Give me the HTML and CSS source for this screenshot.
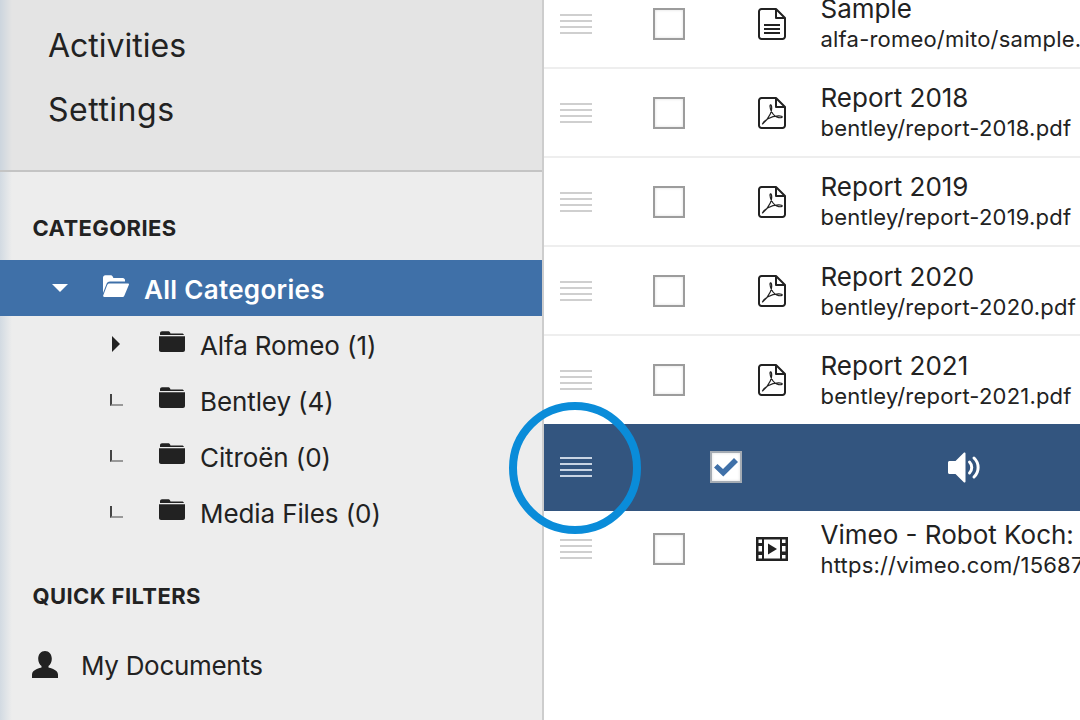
FILE: index.html
```html
<!DOCTYPE html>
<html lang="en">
<head>
<meta charset="utf-8">
<title>Documents</title>
<link rel="stylesheet" href="styles.css">
</head>
<body>
<svg class="defs" aria-hidden="true">
  <defs>
    <symbol id="folder" viewBox="0 0 26 21"><path d="M1 4V2.200C1 1 1.900.2 3 .2h6c1 0 1.700.5 2.100 1.300L11.500 2.400H23c1 0 1.800.6 2 1.600H1z"/><path d="M0 5.200h26V19c0 1.200-.9 2-2 2H2c-1.100 0-2-.8-2-2z"/></symbol>
    <symbol id="folder-open" viewBox="0 0 26 22"><path d="M0 18V2.500C0 1.200 1 .2 2.300.2h5c1.100 0 1.900.5 2.400 1.400l.7 1.300h9.400c1.200 0 2.200 1 2.200 2.200v1.300H7c-1.500 0-2.700.8-3.300 2.200z"/><path d="M6.300 8.400H25c.8 0 1.200.7.900 1.400l-4.500 10.600c-.4 1-1.200 1.600-2.300 1.600H1.100c-.8 0-1.200-.7-.9-1.400L4.200 10c.4-1 1.100-1.600 2.100-1.600z"/></symbol>
    <symbol id="doc" viewBox="0 0 28 32"><path class="line" d="M3.500 1H18l9 9v18.500a2.500 2.500 0 0 1-2.500 2.500h-21A2.500 2.500 0 0 1 1 28.500v-25A2.500 2.500 0 0 1 3.500 1z"/><path class="line" d="M18 1v9h9"/><path class="line" d="M6 17h16M6 21h16M6 25h16"/></symbol>
    <symbol id="pdf" viewBox="0 0 28 32"><path class="line" d="M3.500 1H18l9 9v18.500a2.500 2.500 0 0 1-2.500 2.500h-21A2.500 2.500 0 0 1 1 28.500v-25A2.500 2.500 0 0 1 3.500 1z"/><path class="line" d="M18 1v9h9"/><path class="thin" d="M4.500 27c3.500-3 6-6 7.800-10 1.300-3 1.800-6 1-8.500-.4-1.200-1.400-.8-1.300.8.300 3.700 2.500 7.700 5 9.700 2 1.500 5.500 2.300 7 1.300.8-.8-1-1.600-3.500-1.500-3.500.1-7.500 1.200-10.500 3-3 1.800-5 3.500-5.500 5.200z"/></symbol>
    <symbol id="film" viewBox="0 0 32 24"><path fill-rule="evenodd" d="M0 0h32v24H0zM2.500 2.500v3.500h3.500V2.500zm0 6.500v5.500h3.500V9zm0 9v3.500h3.500V18zM26 2.500v3.500h3.500V2.500zm0 6.500v5.500h3.500V9zm0 9v3.500h3.500V18zM8 2.500v19h16v-19z"/><path d="M12 6.500 21 12l-9 5.500z"/></symbol>
    <symbol id="speaker" viewBox="0 0 33 33"><path d="M17.500 2.500v28c0 .9-1 1.300-1.700.7L7.500 23H1.500C.7 23 0 22.300 0 21.500v-10C0 10.700.7 10 1.500 10h6l8.300-8.200c.7-.6 1.700-.2 1.700.7z"/><path class="sound" d="M21.500 11c3 3 3 8 0 11"/><path class="sound" d="M26 7c5.500 5.300 5.500 13.700 0 19"/></symbol>
    <symbol id="person" viewBox="0 0 26 27"><path d="M13 0c4 0 6.800 3.400 6.800 7.700 0 3-1.300 5.800-3.300 7.300v1.500c1 .6 9.500 1.800 9.500 7V27H0v-3.500c0-5.200 8.500-6.400 9.500-7V15c-2-1.500-3.300-4.300-3.300-7.300C6.200 3.400 9 0 13 0z"/></symbol>
    <symbol id="check" viewBox="0 0 24 20"><path d="M0 10.500 3.500 7l5.500 5L20 1l4 4L9.300 19.500z"/></symbol>
  </defs>
</svg>
<div class="app">
  <aside class="sidebar">
    <nav class="main-nav">
      <a class="nav-link">Activities</a>
      <a class="nav-link nav-link-wide">Settings</a>
    </nav>
    <div class="panel">
      <h2 class="panel-title">CATEGORIES</h2>
      <ul class="tree">
        <li class="tree-row tree-row-root">
          <span class="caret-down"></span>
          <svg class="icon-open"><use href="#folder-open"/></svg>
          <span class="tree-label">All Categories</span>
        </li>
        <li class="tree-row">
          <span class="toggle"><span class="caret-right"></span></span>
          <svg class="icon-folder"><use href="#folder"/></svg>
          <span class="tree-label">Alfa Romeo (1)</span>
        </li>
        <li class="tree-row">
          <span class="toggle"><span class="elbow"></span></span>
          <svg class="icon-folder"><use href="#folder"/></svg>
          <span class="tree-label">Bentley (4)</span>
        </li>
        <li class="tree-row">
          <span class="toggle"><span class="elbow"></span></span>
          <svg class="icon-folder"><use href="#folder"/></svg>
          <span class="tree-label">Citroën (0)</span>
        </li>
        <li class="tree-row">
          <span class="toggle"><span class="elbow"></span></span>
          <svg class="icon-folder"><use href="#folder"/></svg>
          <span class="tree-label">Media Files (0)</span>
        </li>
      </ul>
      <h2 class="panel-title panel-title-filters">QUICK FILTERS</h2>
      <div class="filter">
        <svg class="icon-person"><use href="#person"/></svg>
        <span class="tree-label">My Documents</span>
      </div>
    </div>
  </aside>
  <main class="content">
    <div class="row">
      <div class="handle"><i></i><i></i><i></i><i></i></div>
      <div class="cell"><span class="box"></span></div>
      <div class="cell"><svg class="icon-file"><use href="#doc"/></svg></div>
      <div class="info"><div class="name">Sample</div><div class="path">alfa-romeo/mito/sample.doc</div></div>
    </div>
    <div class="row">
      <div class="handle"><i></i><i></i><i></i><i></i></div>
      <div class="cell"><span class="box"></span></div>
      <div class="cell"><svg class="icon-file"><use href="#pdf"/></svg></div>
      <div class="info"><div class="name">Report 2018</div><div class="path">bentley/report-2018.pdf</div></div>
    </div>
    <div class="row">
      <div class="handle"><i></i><i></i><i></i><i></i></div>
      <div class="cell"><span class="box"></span></div>
      <div class="cell"><svg class="icon-file"><use href="#pdf"/></svg></div>
      <div class="info"><div class="name">Report 2019</div><div class="path">bentley/report-2019.pdf</div></div>
    </div>
    <div class="row">
      <div class="handle"><i></i><i></i><i></i><i></i></div>
      <div class="cell"><span class="box"></span></div>
      <div class="cell"><svg class="icon-file"><use href="#pdf"/></svg></div>
      <div class="info"><div class="name">Report 2020</div><div class="path">bentley/report-2020.pdf</div></div>
    </div>
    <div class="row row-before-drag">
      <div class="handle"><i></i><i></i><i></i><i></i></div>
      <div class="cell"><span class="box"></span></div>
      <div class="cell"><svg class="icon-file"><use href="#pdf"/></svg></div>
      <div class="info"><div class="name">Report 2021</div><div class="path">bentley/report-2021.pdf</div></div>
    </div>
    <div class="row-drag">
      <div class="handle handle-light"><i></i><i></i><i></i><i></i></div>
      <div class="cell"><span class="box box-checked"><svg class="icon-check"><use href="#check"/></svg></span></div>
      <div class="cell cell-speaker"><svg class="icon-speaker"><use href="#speaker"/></svg></div>
      <span class="ring"></span>
    </div>
    <div class="row row-last">
      <div class="handle"><i></i><i></i><i></i><i></i></div>
      <div class="cell"><span class="box"></span></div>
      <div class="cell"><svg class="icon-film"><use href="#film"/></svg></div>
      <div class="info"><div class="name">Vimeo - Robot Koch: Hard Times</div><div class="path">https://vimeo.com/156873210</div></div>
    </div>
  </main>
</div>
</body>
</html>
```
FILE: styles.css
```css
* { box-sizing: border-box; }
html, body { margin: 0; height: 100%; background: #fff; }
body { font-family: Inter, "Liberation Sans", sans-serif; color: #222; overflow: hidden; }
.defs { width: 0; height: 0; display: block; }
.app { display: flex; width: 1080px; height: 720px; overflow: hidden; }

.sidebar {
  width: 544px; flex: none; display: flex; flex-direction: column;
  border-right: 2px solid #cdcdcd; background: #ededed;
}
.main-nav {
  height: 172px; flex: none; display: flex; flex-direction: column; gap: 18px;
  padding: 23px 0 0 48px; border-bottom: 2px solid #c4c4c4;
  background: linear-gradient(90deg, #ccd5de 0, #e4e4e4 12px);
}
.nav-link { font-size: 32px; line-height: 46px; }
.nav-link-wide { letter-spacing: .5px; }
.panel { flex: 1; background: linear-gradient(90deg, #d2dae2 0, #ededed 12px); }
.panel-title {
  margin: 0; padding: 44px 0 0 32.5px; font-size: 22px; line-height: 24px;
  font-weight: 700; letter-spacing: .4px; color: #222;
}
.tree { list-style: none; margin: 20px 0 0; padding: 0; }
.tree-row {
  height: 56px; display: flex; align-items: center; padding-left: 104px;
  font-size: 26px; letter-spacing: -.1px;
}
.tree-label { padding-top: 2px; }
.tree-row-root {
  padding-left: 52px; background: #3f70a8; color: #fff; font-weight: 600; letter-spacing: .3px;
}
.caret-down { width: 0; height: 0; border: solid transparent; border-width: 8px 8px 0; border-top-color: #fff; margin-right: 35px; }
.toggle { width: 55px; height: 20px; flex: none; display: flex; align-items: center; }
.caret-right { width: 0; height: 0; border: solid transparent; border-width: 8px 0 8px 8px; border-left-color: #222; margin-left: 8px; }
.elbow { width: 13px; height: 12px; margin: 0 0 0 6px; border-left: 2px solid #444; border-bottom: 2px solid #999; }
.icon-folder { width: 26px; height: 21px; fill: #222; flex: none; margin: -5px 15px 0 0; }
.icon-open { width: 26px; height: 22px; fill: #fff; flex: none; margin: -4px 15px 0 0; }
.panel-title-filters { padding-top: 44px; }
.filter { display: flex; align-items: center; margin: 38px 0 0 32px; font-size: 26px; letter-spacing: -.3px; height: 36px; }
.icon-person { width: 26px; height: 27px; fill: #222; margin-right: 23px; flex: none; }

.content { flex: 1; min-width: 0; margin-top: -20px; }
.row, .row-drag { display: grid; grid-template-columns: 64px 122px 84px 1fr; align-items: center; }
.row { height: 89px; border-bottom: 2px solid #eeeeee; }
.row-before-drag { border-bottom: 0; height: 88px; }
.row-last { border-bottom: 0; }
.row:nth-child(n+4) .info { padding-top: 2px; }
.row-drag {
  grid-template-columns: 64px 236px 238px; height: 87px; margin-bottom: -7px; padding-bottom: 1px;
  position: relative; z-index: 1; background: #33557f;
}
.handle { display: flex; flex-direction: column; gap: 4px; width: 32px; margin-left: 16px; }
.handle i { display: block; height: 2px; background: #cfcfcf; }
.handle-light i { background: #c9d5e4; }
.cell { display: flex; justify-content: center; align-items: center; }
.cell-speaker { padding-left: 2px; }
.box { width: 32px; height: 32px; border: 2px solid #9c9c9c; background: #fff; box-shadow: inset 0 0 3px rgba(0,0,0,.14); display: flex; align-items: center; justify-content: center; }
.box-checked { border-color: #a5acb4; }
.icon-check { width: 24px; height: 20px; fill: #3f70a8; }
.icon-file { width: 28px; height: 32px; }
.icon-film { width: 32px; height: 24px; fill: #222; }
.icon-speaker { width: 33px; height: 33px; fill: #fff; }
.line { fill: none; stroke: #222; stroke-width: 2; stroke-linejoin: round; }
.thin { fill: none; stroke: #222; stroke-width: 1.200; stroke-linejoin: round; }
.sound { fill: none; stroke: #fff; stroke-width: 3; stroke-linecap: round; }
.info { padding-left: 6.500px; white-space: nowrap; overflow: hidden; }
.name { font-size: 26px; line-height: 30px; }
.path { font-size: 22px; line-height: 30px; letter-spacing: .2px; }
.ring {
  position: absolute; left: -35px; top: -22px; width: 132px; height: 132px;
  border: 8px solid #0a8cd9; border-radius: 50%;
}
```
